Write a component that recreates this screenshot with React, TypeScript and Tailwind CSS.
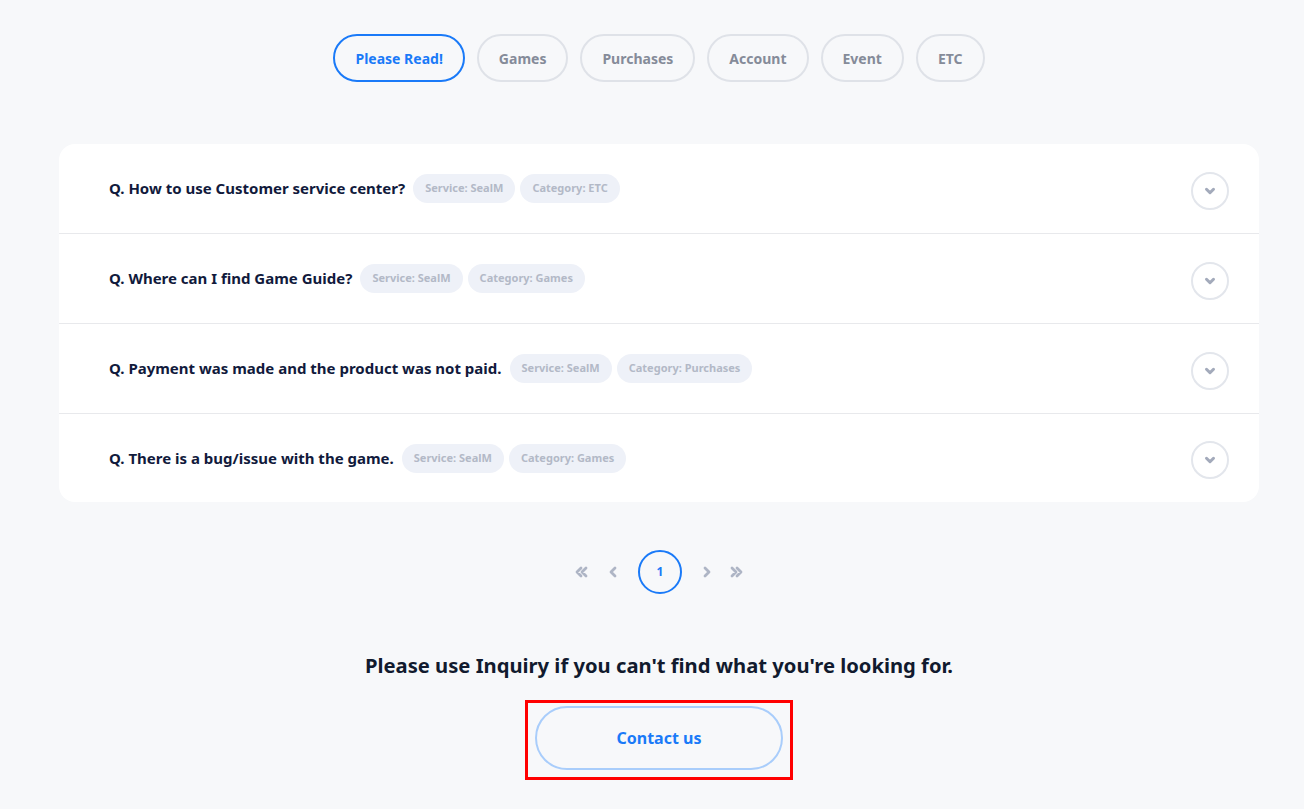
import React, { useState } from 'react';

const tabs = ['Please Read!', 'Games', 'Purchases', 'Account', 'Event', 'ETC'];

const faqs = [
  { q: 'Q. How to use Customer service center?', category: 'ETC' },
  { q: 'Q. Where can I find Game Guide?', category: 'Games' },
  { q: 'Q. Payment was made and the product was not paid.', category: 'Purchases' },
  { q: 'Q. There is a bug/issue with the game.', category: 'Games' },
];

function Chevron({ className }: { className?: string }) {
  return (
    <svg viewBox="0 0 12 12" className={className} fill="none" stroke="currentColor" strokeWidth="2.6" strokeLinecap="round" strokeLinejoin="round">
      <path d="M3 4.5 6 7.5 9 4.5" />
    </svg>
  );
}

function PageArrow({ d }: { d: string }) {
  return (
    <svg viewBox="0 0 16 16" className="h-4 w-4 text-[#aeb5c5]" fill="none" stroke="currentColor" strokeWidth="2.8" strokeLinecap="round" strokeLinejoin="round">
      <path d={d} />
    </svg>
  );
}

function App() {
  const [active, setActive] = useState(0);

  return (
    <div className="min-h-screen bg-[#f7f8fa] pl-[14px] font-['Noto_Sans',sans-serif]">
      <div className="mx-auto w-[1200px] pt-[34px] pb-[29px]">
        {/* Category tabs */}
        <div className="flex justify-center gap-3">
          {tabs.map((t, i) => (
            <button
              key={t}
              onClick={() => setActive(i)}
              className={
                i === active
                  ? 'h-12 rounded-full border-2 border-[#1a7af8] px-5 text-[14px] font-bold text-[#1a7af8]'
                  : 'h-12 rounded-full border-2 border-[#dfe2e8] px-5 text-[14px] font-bold text-[#858b99]'
              }
            >
              {t}
            </button>
          ))}
        </div>

        {/* FAQ list */}
        <div className="mt-[62px] overflow-hidden rounded-2xl bg-white">
          {faqs.map((f, i) => (
            <div
              key={f.q}
              className={
                'flex items-center justify-between pl-[50px] pr-[30px]' +
                (i < faqs.length - 1 ? ' h-[90px] border-b border-[#e8e9ec]' : ' h-[88px]')
              }
            >
              <div className="flex items-center">
                <span className="text-[15px] font-bold text-[#111a3c]">{f.q}</span>
                <span className="ml-2 flex h-[29px] items-center rounded-full bg-[#eef1f8] px-3 text-[11px] font-bold text-[#b3b9c7]">
                  Service: SealM
                </span>
                <span className="ml-[5px] flex h-[29px] items-center rounded-full bg-[#eef1f8] px-3 text-[11px] font-bold text-[#b3b9c7]">
                  Category: {f.category}
                </span>
              </div>
              <div className="mt-1 flex h-[38px] w-[38px] items-center justify-center rounded-full border-2 border-[#e3e6ec]">
                <Chevron className="h-3.5 w-3.5 text-[#a3aabb]" />
              </div>
            </div>
          ))}
        </div>

        {/* Pagination */}
        <div className="mt-[48px] flex items-center justify-center">
          <PageArrow d="M8 4 4 8l4 4M13 4 9 8l4 4" />
          <span className="ml-[16px]">
            <PageArrow d="M10 4 6 8l4 4" />
          </span>
          <div className="ml-[17px] flex h-11 w-11 items-center justify-center rounded-full border-2 border-[#1a7af8] text-[12px] font-bold text-[#1a7af8]">
            1
          </div>
          <span className="ml-[17px]">
            <PageArrow d="M6 4l4 4-4 4" />
          </span>
          <span className="ml-[14px]">
            <PageArrow d="M3 4l4 4-4 4M8 4l4 4-4 4" />
          </span>
        </div>

        {/* Inquiry */}
        <p className="mt-[56px] text-center text-[20.2px] font-bold text-[#111a2e]">
          Please use Inquiry if you can't find what you're looking for.
        </p>
        <div className="mt-[20px] flex justify-center">
          <div className="border-[3px] border-[#ff0000] px-[7px] pt-[3px] pb-[7px]">
            <button className="h-[64px] w-[248px] rounded-full border-2 border-[#a9cdfb] text-[16px] font-bold text-[#1a7af8]">
              Contact us
            </button>
          </div>
        </div>
      </div>
    </div>
  );
}

export default App;
